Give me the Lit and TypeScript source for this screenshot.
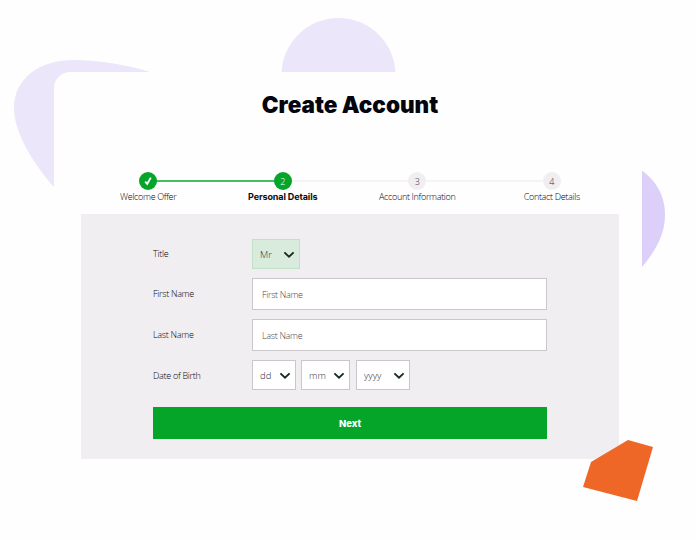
import { LitElement, html, css, svg } from "lit";
import { customElement } from "lit/decorators.js";

const chevron = html`<svg class="chev" width="12" height="8" viewBox="0 0 12 8" aria-hidden="true"><path d="M1.4 1.4 6 5.8 10.6 1.4" fill="none" stroke="#1b2a22" stroke-width="1.9"/></svg>`;

const pick = (value: string, cls: string) => html`
  <div class="pick ${cls}">
    <select><option>${value}</option></select>
    ${chevron}
  </div>`;

const steps = [
  { label: "Welcome Offer", state: "done", n: "" },
  { label: "Personal Details", state: "current", n: "2" },
  { label: "Account Information", state: "todo", n: "3" },
  { label: "Contact Details", state: "todo", n: "4" },
];

@customElement("app-root")
export class AppRoot extends LitElement {
  static styles = css`
    :host {
      display: block;
      position: relative;
      width: 696px;
      height: 540px;
      overflow: hidden;
      background: #fefefe;
      font-family: "Open Sans", "Liberation Sans", sans-serif;
    }
    .deco { position: absolute; inset: 0; }
    .card {
      position: absolute;
      left: 54px;
      top: 72px;
      width: 588px;
      height: 420px;
      box-sizing: border-box;
      background: #fefefe;
      border-radius: 16px 0 0 0;
      padding: 0 23px 0 27px;
      display: flex;
      flex-direction: column;
    }
    h1 {
      margin: 18px 0 0;
      height: 30px;
      line-height: 30px;
      text-align: center;
      font-family: Inter, "Liberation Sans", sans-serif;
      font-size: 22.5px;
      font-weight: 900;
      color: #05050f;
    }
    .steps {
      margin-top: 52px;
      display: grid;
      grid-template-columns: repeat(4, 1fr);
      height: 42px;
    }
    .step {
      position: relative;
      display: flex;
      flex-direction: column;
      align-items: center;
      font-size: 9px;
      font-weight: 300;
      color: #05050f;
      letter-spacing: -0.32px;
    }
    .step::before {
      content: "";
      position: absolute;
      top: 8px;
      left: 50%;
      width: 100%;
      height: 2px;
      background: #f5f3f5;
    }
    .step:last-child::before { display: none; }
    .step.done::before { background: #45bf63; }
    .dot {
      position: relative;
      width: 18px;
      height: 18px;
      border-radius: 50%;
      display: flex;
      align-items: center;
      justify-content: center;
      font-size: 9px;
      letter-spacing: 0;
      background: #f0eef0;
      color: #33333a;
    }
    .done .dot, .current .dot { background: #05a529; color: #fff; }
    .lbl { line-height: 13px; white-space: nowrap; }
    .current .lbl {
      font-family: Inter, sans-serif;
      font-size: 9px;
      font-weight: 700;
      color: #0a0a14;
      letter-spacing: -0.1px;
    }
    .panel {
      height: 245px;
      background: #f0eef0;
      padding: 25px 72px 0;
      box-sizing: border-box;
      display: flex;
      flex-direction: column;
    }
    .row { display: flex; align-items: center; }
    .row + .row { margin-top: 9px; }
    label {
      width: 99px;
      flex: none;
      margin-top: -2px;
      font-size: 9px;
      font-weight: 300;
      color: #05050f;
      letter-spacing: -0.28px;
    }
    .row.dob label { margin-top: 0; }
    .field {
      flex: 1;
      height: 32px;
      box-sizing: border-box;
      border: 1px solid #c9c7cb;
      background: #fff;
      padding: 0 9px;
      font: 300 9px "Open Sans", sans-serif;
      letter-spacing: -0.3px;
      outline: none;
      border-radius: 0;
    }
    .field::placeholder { color: #45454d; opacity: 1; }
    .pick { position: relative; height: 30px; box-sizing: border-box; }
    .pick select {
      appearance: none;
      width: 100%;
      height: 100%;
      box-sizing: border-box;
      border: 1px solid #c9c7cb;
      border-radius: 0;
      background: #fff;
      font: 300 9.5px "Open Sans", sans-serif;
      color: #2c2c34;
      padding: 0 0 0 7px;
      outline: none;
    }
    .chev { position: absolute; right: 5px; top: 12px; }
    .title { width: 48px; }
    .title select { background: #d9ebdd; border-color: #bfe2c7; }
    .dd { width: 44px; }
    .mm { width: 49px; margin-left: 5px; }
    .yy { width: 54px; margin-left: 6px; }
    button {
      margin-top: 17px;
      height: 32px;
      border: 0;
      background: #05a529;
      color: #fff;
      font: 800 9.5px Inter, sans-serif;
    }
  `;

  render() {
    return html`
      <svg class="deco" width="696" height="540" viewBox="0 0 696 540" aria-hidden="true">
        ${svg`
          <path d="M54 187 C30 160 14 130 14 108 C14 78 40 60 74 60 C100 60 128 65 150 72 L150 200 L54 200 Z" fill="#ebe6fa"/>
          <circle cx="338.5" cy="75" r="57" fill="#ebe6fa"/>
          <path d="M630 164 C655 175 665 195 665 215 C665 235 655 255 630 280 Z" fill="#dcd0fb"/>
        `}
      </svg>
      <div class="card">
        <h1>Create Account</h1>
        <div class="steps">
          ${steps.map(
            (s) => html`<div class="step ${s.state}">
              <div class="dot">
                ${s.state === "done"
                  ? html`<svg width="10" height="10" viewBox="0 0 10 10" aria-hidden="true"><path d="M2.2 5.6 4.2 8 7.8 1.6" fill="none" stroke="#fff" stroke-width="1.8"/></svg>`
                  : s.n}
              </div>
              <div class="lbl">${s.label}</div>
            </div>`
          )}
        </div>
        <div class="panel">
          <div class="row"><label>Title</label>${pick("Mr", "title")}</div>
          <div class="row"><label>First Name</label><input class="field" placeholder="First Name" /></div>
          <div class="row"><label>Last Name</label><input class="field" placeholder="Last Name" /></div>
          <div class="row dob">
            <label>Date of Birth</label>
            ${pick("dd", "dd")}${pick("mm", "mm")}${pick("yyyy", "yy")}
          </div>
          <button>Next</button>
        </div>
      </div>
      <svg class="deco" width="696" height="540" viewBox="0 0 696 540" aria-hidden="true">
        ${svg`<polygon points="628,440 653,447 637,501 583,487 591,462" fill="#ee6726"/>`}
      </svg>
    `;
  }
}
